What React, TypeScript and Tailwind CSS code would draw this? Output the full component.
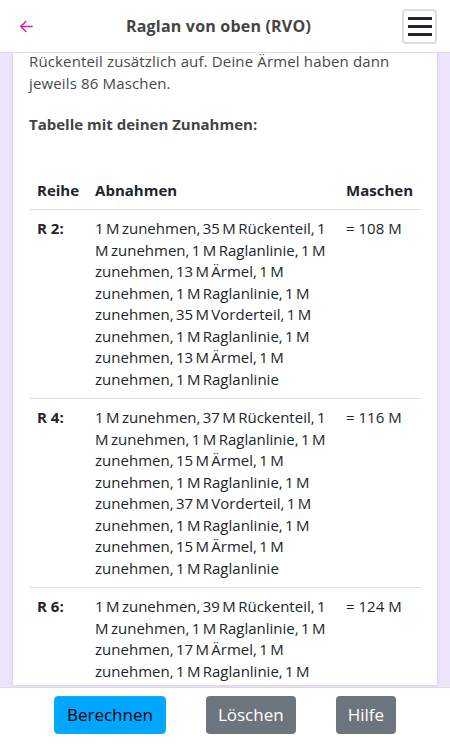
import React from "react";

const rows = [
  {
    r: "R 2:",
    text: "1 M zunehmen, 35 M Rückenteil, 1 M zunehmen, 1 M Raglanlinie, 1 M zunehmen, 13 M Ärmel, 1 M zunehmen, 1 M Raglanlinie, 1 M zunehmen, 35 M Vorderteil, 1 M zunehmen, 1 M Raglanlinie, 1 M zunehmen, 13 M Ärmel, 1 M zunehmen, 1 M Raglanlinie",
    m: "= 108 M",
  },
  {
    r: "R 4:",
    text: "1 M zunehmen, 37 M Rückenteil, 1 M zunehmen, 1 M Raglanlinie, 1 M zunehmen, 15 M Ärmel, 1 M zunehmen, 1 M Raglanlinie, 1 M zunehmen, 37 M Vorderteil, 1 M zunehmen, 1 M Raglanlinie, 1 M zunehmen, 15 M Ärmel, 1 M zunehmen, 1 M Raglanlinie",
    m: "= 116 M",
  },
  {
    r: "R 6:",
    text: "1 M zunehmen, 39 M Rückenteil, 1 M zunehmen, 1 M Raglanlinie, 1 M zunehmen, 17 M Ärmel, 1 M zunehmen, 1 M Raglanlinie, 1 M zunehmen, 39 M Vorderteil, 1 M zunehmen, 1 M Raglanlinie, 1 M zunehmen, 17 M Ärmel, 1 M zunehmen, 1 M Raglanlinie",
    m: "= 124 M",
  },
];

export default function App() {
  return (
    <div
      className="h-screen flex flex-col bg-[#ebe4fc] overflow-hidden"
      style={{ fontFamily: '"Open Sans", "DejaVu Sans", sans-serif' }}
    >
      {/* header */}
      <div className="h-[53px] shrink-0 bg-white border-b border-[#dcdcdc] flex items-center justify-between pl-[18px] pr-[13px]">
        <svg width="17" height="17" viewBox="0 0 24 24" fill="none" stroke="#e0189f" strokeWidth="2" strokeLinecap="round" strokeLinejoin="round">
          <path d="M20 12H4" />
          <path d="M11 19l-7-7 7-7" />
        </svg>
        <h1 className="text-[16px] font-bold text-[#444] tracking-[0.2px]">Raglan von oben (RVO)</h1>
        <button className="w-[35px] h-[35px] rounded border-2 border-[#dddddd] bg-white flex flex-col items-center justify-center gap-[5px]">
          <span className="block w-6 h-[3px] bg-[#212529]" />
          <span className="block w-6 h-[3px] bg-[#212529]" />
          <span className="block w-6 h-[3px] bg-[#212529]" />
        </button>
      </div>

      {/* content */}
      <div className="flex-1 overflow-hidden px-[13px]">
        <div className="bg-white shadow-[0_0_3px_rgba(0,0,0,0.15)] px-4 h-full">
          <p className="text-[15px] leading-[21.5px] text-[#484848] -mt-[2px] tracking-[0.15px]">
            Rückenteil zusätzlich auf. Deine Ärmel haben dann jeweils 86 Maschen.
          </p>
          <p className="text-[15px] leading-[21.5px] text-[#444] font-bold mt-[20px]">
            Tabelle mit deinen Zunahmen:
          </p>
          <table className="w-full mt-[36px] text-[15px] leading-[21.5px] text-[#212529] border-collapse">
            <thead>
              <tr className="border-b border-[#dee2e6]">
                <th className="text-left font-bold p-2 w-[57px]">Reihe</th>
                <th className="text-left font-bold p-2 w-[251px]">Abnahmen</th>
                <th className="text-left font-bold p-2">Maschen</th>
              </tr>
            </thead>
            <tbody>
              {rows.map((row) => (
                <tr key={row.r} className="border-b border-[#dee2e6] align-top">
                  <td className="p-2 font-bold">{row.r}</td>
                  <td className="p-2 [word-spacing:-1.5px]">{row.text}</td>
                  <td className="p-2">{row.m}</td>
                </tr>
              ))}
            </tbody>
          </table>
        </div>
      </div>

      {/* footer */}
      <div className="h-[63px] shrink-0 bg-white border-t border-[#dcdcdc] flex justify-center gap-10 pt-2">
        <button className="h-[38px] px-3 rounded bg-[#00a6ff] border border-[#00b4f0] text-black text-[17px]">Berechnen</button>
        <button className="h-[38px] px-3 rounded bg-[#6c757d] text-white text-[17px]">Löschen</button>
        <button className="h-[38px] px-3 rounded bg-[#6c757d] text-white text-[17px]">Hilfe</button>
      </div>
    </div>
  );
}
